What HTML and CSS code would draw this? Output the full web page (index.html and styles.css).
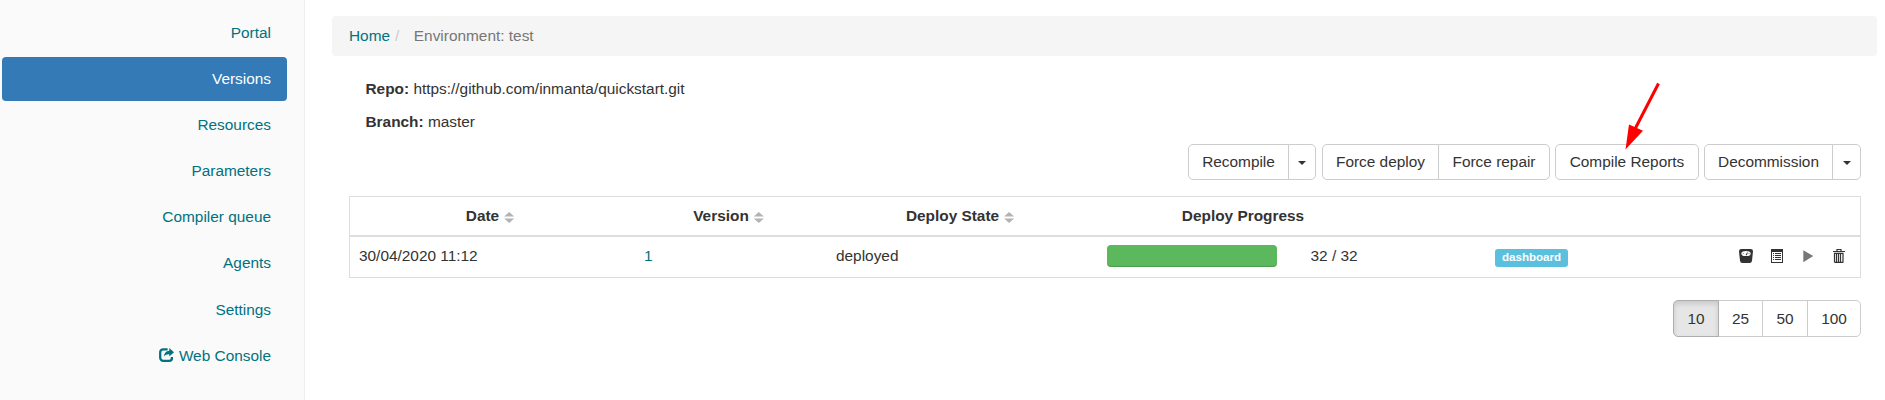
FILE: index.html
```html
<!DOCTYPE html>
<html lang="en">
<head>
<meta charset="utf-8">
<title>Environment: test</title>
<link rel="stylesheet" href="styles.css">
</head>
<body>
<div class="layout">
  <nav class="sidebar">
    <a class="nav-item">Portal</a>
    <a class="nav-item active">Versions</a>
    <a class="nav-item">Resources</a>
    <a class="nav-item">Parameters</a>
    <a class="nav-item">Compiler queue</a>
    <a class="nav-item">Agents</a>
    <a class="nav-item">Settings</a>
    <a class="nav-item"><svg class="share" viewBox="0 0 15 14"><path d="M8.600 1.300H4.300A3 3 0 0 0 1.200 4.300v5.400A3 3 0 0 0 4.300 12.800h6A2.600 2.600 0 0 0 12.900 10.200V9" fill="none" stroke="currentColor" stroke-width="2.300"/><path d="M10.300 0 15 4.300l-4.700 4.300V6.200C7.800 6.100 6.300 6.900 4.900 8.500 5.200 5.200 7 2.900 10.300 2.700z" fill="currentColor"/></svg>Web Console</a>
  </nav>
  <main class="main">
    <div class="breadcrumb"><a class="link">Home</a><span class="slash">/</span><span class="crumb">Environment: test</span></div>
    <div class="info">
      <p class="info-line"><b>Repo:</b> https://github.com/inmanta/quickstart.git</p>
      <p class="info-line"><b>Branch:</b> master</p>
    </div>
    <div class="toolbar">
      <div class="group first"><button class="btn recompile">Recompile</button><button class="btn toggle"><i class="caret"></i></button></div>
      <div class="group"><button class="btn deploy">Force deploy</button><button class="btn repair">Force repair</button></div>
      <div class="group"><button class="btn reports">Compile Reports</button></div>
      <div class="group"><button class="btn decommission">Decommission</button><button class="btn toggle wide"><i class="caret"></i></button></div>
    </div>
    <div class="table">
      <div class="row head">
        <div class="th">Date<i class="sort"></i></div>
        <div class="th">Version<i class="sort"></i></div>
        <div class="th">Deploy State<i class="sort"></i></div>
        <div class="th progress-head">Deploy Progress</div>
      </div>
      <div class="row body">
        <div class="td">30/04/2020 11:12</div>
        <div class="td"><a class="link">1</a></div>
        <div class="td">deployed</div>
        <div class="td progress-cell"><div class="progress"></div><span>32 / 32</span></div>
        <div class="td label-cell"><span class="badge">dashboard</span></div>
        <div class="td actions">
          <svg class="icon" viewBox="0 0 14 14"><path d="M2.300 0h9.400Q14 0 14 2.300L13 11.800Q12.700 14 10.600 14H3.400Q1.300 14 1 11.800L0 2.300Q0 0 2.300 0z" fill="#333"/><path d="M7 1.900c2.500 0 4.300.7 4.700 2.100.2 1.500-1 2.900-2.300 3H4.600C3.300 6.900 2.100 5.500 2.300 4 2.700 2.600 4.500 1.900 7 1.900z" fill="#fff"/><path d="M6.600 6 8.200 3.200l.5.3-.7 2.700zM3.800 4.200h.8v.8h-.8zM9.700 4.200h.8v.8h-.8z" fill="#333"/></svg>
          <svg class="icon" viewBox="0 0 14 14"><path d="M1 0h12v14H1zM2 3v10h10V3z" fill="#333" fill-rule="evenodd"/><path d="M3 4.500h1M3 6.500h1M3 8.500h1M3 10.500h1M5 4.500h6M5 6.500h6M5 8.500h6M5 10.500h6" stroke="#333"/></svg>
          <svg class="icon" viewBox="0 0 14 14"><path d="M2.300 1.200 12.200 7 2.300 13.200z" fill="#777"/></svg>
          <svg class="icon" viewBox="0 0 14 14"><path d="M5 2V.5h4V2M1 2.500h12" fill="none" stroke="#333" stroke-width="1.200"/><path d="M2.500 4v9M4.500 4v9M6.500 4v9M8.500 4v9M11 4v9M2 4.300h9.500M2.300 13.400h9.100" fill="none" stroke="#333" stroke-width="1.200"/></svg>
        </div>
      </div>
    </div>
    <div class="pager">
      <button class="btn page ten">10</button><button class="btn page">25</button><button class="btn page fifty">50</button><button class="btn page hundred">100</button>
    </div>
  </main>
</div>
<svg class="pointer" viewBox="0 0 40 70"><path d="M35.500 1.500 12 47" stroke="#f00" stroke-width="3"/><path d="M2.500 67.500 6 42.500l14 6.300z" fill="#f00"/></svg>
</body>
</html>
```
FILE: styles.css
```css
* { box-sizing: border-box; }
body {
  margin: 0;
  font: 15.4px/22px "Liberation Sans", Arial, sans-serif;
  color: #333;
  background: #fff;
  overflow: hidden;
}
.layout { display: flex; height: 400px; }
.link { color: #007280; }
.sidebar {
  width: 305px;
  flex: none;
  padding: 11px 17px 0 2px;
  background: #fafafa;
  border-right: 1px solid #eee;
  display: flex;
  flex-direction: column;
  gap: 2px;
}
.nav-item {
  height: 44.16px;
  flex: none;
  padding: 10.65px 16px 0 0;
  text-align: right;
  color: #007280;
  border-radius: 4px;
}
.nav-item.active { background: #337ab7; color: #fff; }
.share { width: 15px; height: 14px; margin-right: 5px; vertical-align: -1px; }
.main { flex: 1; padding: 16px 8px 0 27px; min-width: 0; }
.breadcrumb {
  height: 40px;
  padding: 9px 17px;
  border-radius: 4px;
  background: #f5f5f5;
  color: #777;
}
.slash { color: #ccc; padding: 0 14.500px 0 5px; }
.info { padding: 22px 0 0 33.500px; }
.info-line { margin: 0 0 11px; }
.toolbar {
  display: flex;
  justify-content: flex-end;
  gap: 5px;
  padding-right: 16px;
}
.first { margin-right: 1px; }
.group, .pager { display: flex; }
.btn {
  height: 36px;
  padding: 0;
  margin: 0 0 0 -1px;
  border: 1px solid #ccc;
  background: #fff;
  color: #333;
  font: inherit;
  text-align: center;
}
.btn:first-child { margin-left: 0; border-radius: 5px 0 0 5px; }
.btn:last-child { border-radius: 0 5px 5px 0; }
.btn:only-child { border-radius: 5px; }
.recompile { width: 101px; }
.toggle { width: 28px; }
.toggle.wide { width: 29px; }
.deploy { width: 117px; }
.repair { width: 112px; }
.reports { width: 144px; }
.decommission { width: 129px; }
.caret {
  display: inline-block;
  border: 4px solid transparent;
  border-top-color: #333;
  border-bottom: 0;
  vertical-align: middle;
}
.table { margin: 16px 16px 0 17px; border: 1px solid #ddd; }
.row {
  display: grid;
  grid-template-columns: 285px 192px 271px 388px 98px 1fr;
}
.head { height: 40px; border-bottom: 2px solid #ddd; }
.th {
  display: flex;
  justify-content: center;
  padding-top: 8px;
  font-weight: bold;
}
.progress-head { padding-right: 98px; }
.sort {
  width: 10px;
  height: 11px;
  margin: 7px 5px 0 5px;
  background: #b3b3b3;
  clip-path: polygon(50% 0, 100% 40%, 0 40%, 0 60%, 100% 60%, 50% 100%, 0 60%, 0 40%);
}
.body { height: 40px; }
.td { padding: 8px 0 0 9px; }
.progress-cell { display: flex; gap: 33.500px; }
.progress {
  width: 170px;
  height: 22px;
  border-radius: 4px;
  background: #5cb85c;
  box-shadow: inset 0 -1px 0 rgba(0, 0, 0, .15);
}
.label-cell { padding-top: 12px; }
.badge {
  display: block;
  width: 73px;
  height: 18px;
  border-radius: 3px;
  background: #5bc0de;
  color: #fff;
  font-size: 11.550px;
  font-weight: bold;
  line-height: 17px;
  text-align: center;
}
.actions { display: flex; justify-content: flex-end; gap: 17px; padding: 12px 14px 0 0; }
.icon { width: 14px; height: 14px; }
.pager { justify-content: flex-end; margin-top: 22px; padding-right: 16px; }
.page { width: 45px; height: 37px; }
.ten {
  width: 46px;
  background: #e6e6e6;
  border-color: #adadad;
  box-shadow: inset 0 3px 5px rgba(0, 0, 0, .125);
  position: relative;
}
.fifty { width: 46px; }
.hundred { width: 54px; }
.pointer { position: absolute; left: 1623px; top: 82px; width: 40px; height: 70px; }
```
